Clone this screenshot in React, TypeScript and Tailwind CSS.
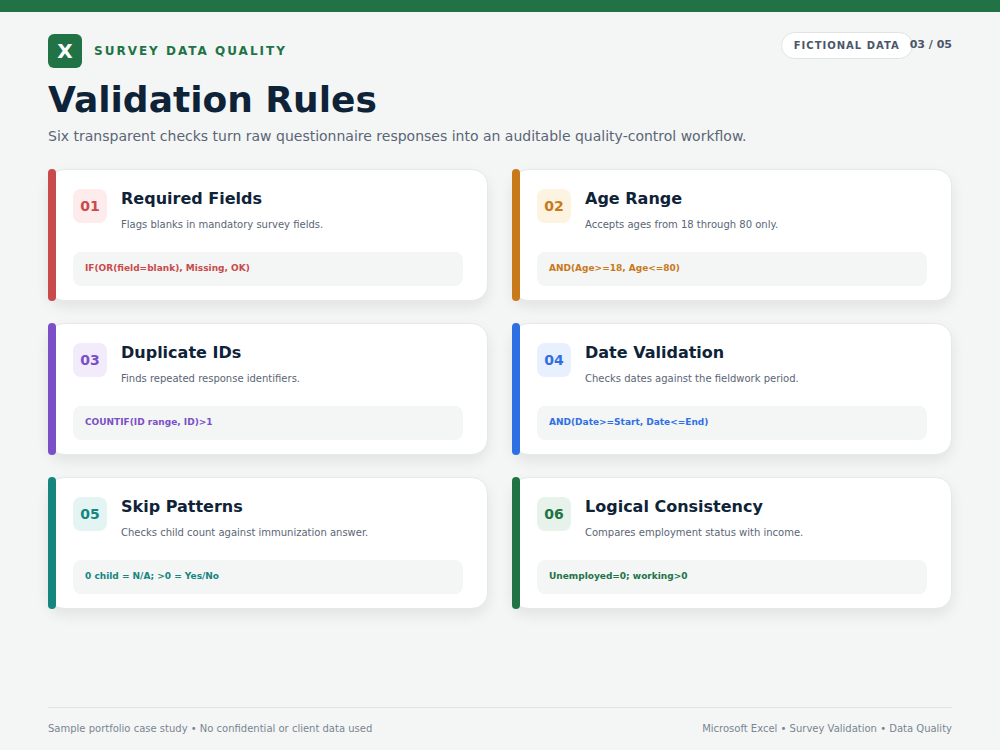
import React from 'react';

const rules = [
  { n: '01', title: 'Required Fields', desc: 'Flags blanks in mandatory survey fields.', f: 'IF(OR(field=blank), Missing, OK)', bar: 'bg-[#c94a4a]', badge: 'bg-[#fdeceb] text-[#c94a4a]', text: 'text-[#c94a4a]' },
  { n: '02', title: 'Age Range', desc: 'Accepts ages from 18 through 80 only.', f: 'AND(Age>=18, Age<=80)', bar: 'bg-[#c8791a]', badge: 'bg-[#fdf3e1] text-[#c8791a]', text: 'text-[#c8791a]' },
  { n: '03', title: 'Duplicate IDs', desc: 'Finds repeated response identifiers.', f: 'COUNTIF(ID range, ID)>1', bar: 'bg-[#7b4fc7]', badge: 'bg-[#f1ebfb] text-[#7b4fc7]', text: 'text-[#7b4fc7]' },
  { n: '04', title: 'Date Validation', desc: 'Checks dates against the fieldwork period.', f: 'AND(Date>=Start, Date<=End)', bar: 'bg-[#2f6fe4]', badge: 'bg-[#e9f0fd] text-[#2f6fe4]', text: 'text-[#2f6fe4]' },
  { n: '05', title: 'Skip Patterns', desc: 'Checks child count against immunization answer.', f: '0 child = N/A; >0 = Yes/No', bar: 'bg-[#14857f]', badge: 'bg-[#e3f4f3] text-[#14857f]', text: 'text-[#14857f]' },
  { n: '06', title: 'Logical Consistency', desc: 'Compares employment status with income.', f: 'Unemployed=0; working>0', bar: 'bg-[#217346]', badge: 'bg-[#e6f2ea] text-[#217346]', text: 'text-[#217346]' },
];

export default function App() {
  return (
    <div className="w-[1000px] h-[750px] bg-[#f4f6f5] flex flex-col overflow-hidden" style={{ fontFamily: '"DejaVu Sans", sans-serif' }}>
      <div className="h-3 bg-[#217346]" />
      <div className="flex-1 px-12 pt-[22px] flex flex-col">
        <div className="flex items-center justify-between">
          <div className="flex items-center gap-3">
            <div className="w-[34px] h-[34px] rounded-md bg-[#217346] text-white font-bold text-[20px] flex items-center justify-center">X</div>
            <span className="text-[12px] font-bold tracking-[2px] text-[#217346]">SURVEY DATA QUALITY</span>
          </div>
          <div className="flex items-center -mt-3">
            <span className="px-3 py-[5px] rounded-full border border-[#dfe3e3] bg-white text-[10px] font-bold tracking-[1px] text-[#4a5568]">FICTIONAL DATA</span>
            <span className="text-[11px] font-bold text-[#4a5568] -ml-[3px]">03 / 05</span>
          </div>
        </div>
        <h1 className="mt-[10px] text-[36px] leading-[44px] font-bold text-[#0f2338]">Validation Rules</h1>
        <p className="mt-[4px] text-[14px] text-[#5a6575]">Six transparent checks turn raw questionnaire responses into an auditable quality-control workflow.</p>
        <div className="mt-[22px] grid grid-cols-2 gap-x-6 gap-y-[22px]">
          {rules.map((r) => (
            <div key={r.n} className="relative h-[132px] bg-white rounded-2xl border border-[#e6e9e9] shadow-[0_6px_14px_rgba(0,0,0,0.08)] pl-6 pr-6 pt-[19px]">
              <div className={`absolute left-[-1px] top-[-1px] bottom-[-1px] w-2 rounded-full ${r.bar}`} />
              <div className="flex gap-[14px]">
                <div className={`w-[34px] h-[34px] rounded-lg flex items-center justify-center text-[14px] font-bold ${r.badge}`}>{r.n}</div>
                <div>
                  <div className="text-[16px] font-bold text-[#0f2338] leading-5">{r.title}</div>
                  <div className="mt-[8px] text-[10px] text-[#5a6575]">{r.desc}</div>
                </div>
              </div>
              <div className={`mt-[20px] h-[34px] rounded-lg bg-[#f4f5f5] flex items-center px-3 text-[9px] font-bold ${r.text}`}>{r.f}</div>
            </div>
          ))}
        </div>
        <div className="mt-auto mb-[14px] border-t border-[#e0e4e4] pt-[13px] flex justify-between text-[10px] text-[#7a8593]">
          <span>Sample portfolio case study • No confidential or client data used</span>
          <span>Microsoft Excel • Survey Validation • Data Quality</span>
        </div>
      </div>
    </div>
  );
}
